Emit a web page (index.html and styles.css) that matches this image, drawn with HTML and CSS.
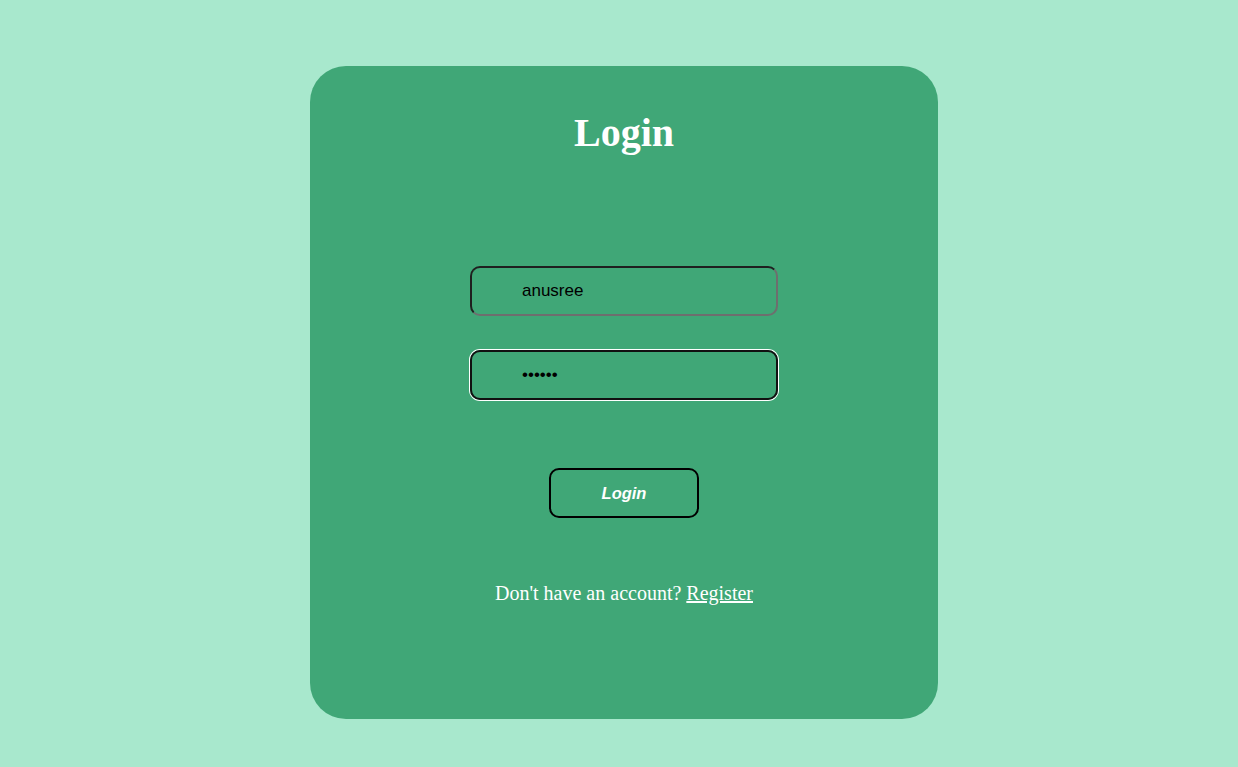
FILE: index.html
```html
<!DOCTYPE html>
<html>
<head>
<meta charset="utf-8">
<title>Login</title>
<link rel="stylesheet" href="styles.css">
</head>
<body>
<div class="card">
  <h1 class="title">Login</h1>
  <form class="form">
    <input class="field" type="text" value="anusree">
    <input class="field field-focus" type="password" value="123456">
    <button class="btn" type="button">Login</button>
  </form>
  <p class="foot">Don't have an account? <a class="link" href="#">Register</a></p>
</div>
</body>
</html>
```

FILE: styles.css
```css
html, body {
  margin: 0;
  padding: 0;
}
body {
  background: #a8e8cd;
  min-height: 767px;
  box-sizing: border-box;
  padding-left: 10px;
  display: flex;
  justify-content: center;
  align-items: flex-start;
  font-family: "Liberation Serif", "Times New Roman", serif;
}
.card {
  margin-top: 66px;
  width: 628px;
  height: 653px;
  box-sizing: border-box;
  background: #40a777;
  border-radius: 36px;
  padding-top: 44px;
  display: flex;
  flex-direction: column;
  align-items: center;
}
.title {
  margin: 0;
  font-size: 40px;
  line-height: 46px;
  font-weight: bold;
  color: #fff;
}
.form {
  margin-top: 110px;
  display: flex;
  flex-direction: column;
  align-items: center;
}
.field {
  width: 308px;
  height: 50px;
  box-sizing: border-box;
  border-width: 2px;
  border-style: solid;
  border-color: #1f1f1f #6e6e6e #6e6e6e #1f1f1f;
  border-radius: 10px;
  background: transparent;
  padding: 0 0 0 50px;
  font-family: "Liberation Sans", Arial, sans-serif;
  font-size: 17px;
  color: #000;
  outline: none;
  margin: 0;
}
.field + .field {
  margin-top: 34px;
}
.field-focus {
  border-color: #111;
  box-shadow: 0 0 0 1px #fff;
}
.btn {
  margin-top: 68px;
  width: 150px;
  height: 50px;
  box-sizing: border-box;
  border: 2px solid #000;
  border-radius: 10px;
  background: transparent;
  color: #fff;
  font-family: "Liberation Sans", Arial, sans-serif;
  font-size: 16.5px;
  font-weight: bold;
  font-style: italic;
  padding: 0;
}
.foot {
  margin: 64px 0 0;
  font-size: 20px;
  line-height: 23px;
  color: #fff;
}
.link {
  color: #fff;
  text-decoration: underline;
}
```
